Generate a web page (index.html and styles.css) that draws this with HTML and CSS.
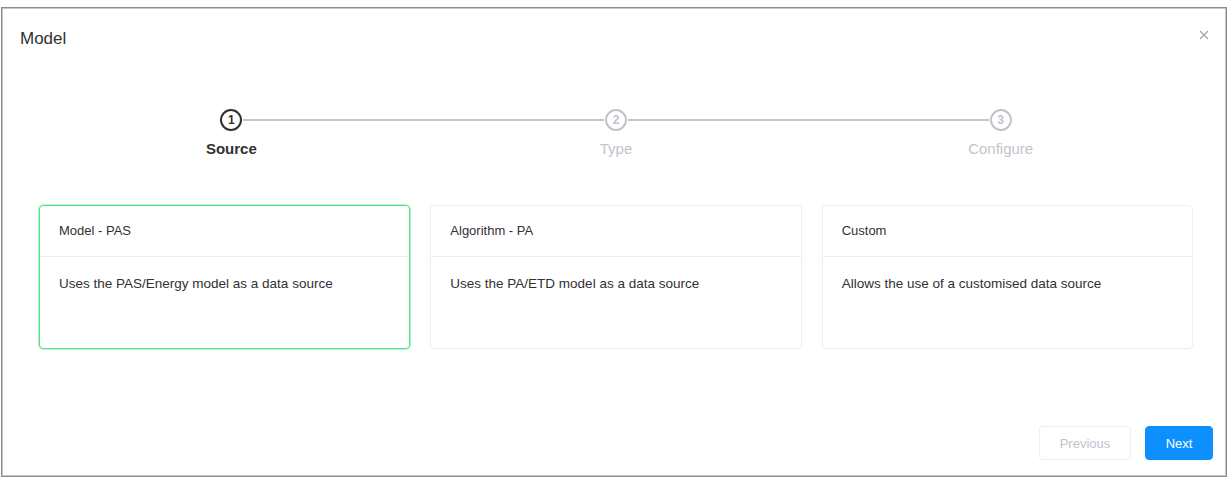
FILE: index.html
```html
<!DOCTYPE html>
<html>
<head>
<meta charset="utf-8">
<link rel="stylesheet" href="styles.css">
</head>
<body>
<div class="frame">
  <div class="header">
    <div class="title">Model</div>
    <svg class="close" width="10" height="10" viewBox="0 0 10 10"><path d="M1 1L9 9M9 1L1 9" stroke="#a3a9b4" stroke-width="1.3" fill="none"/></svg>
  </div>
  <div class="steps">
    <div class="step active">
      <div class="circle">1</div>
      <div class="label">Source</div>
    </div>
    <div class="step">
      <div class="circle">2</div>
      <div class="label">Type</div>
    </div>
    <div class="step last">
      <div class="circle">3</div>
      <div class="label">Configure</div>
    </div>
  </div>
  <div class="cards">
    <div class="card selected">
      <div class="card-head">Model - PAS</div>
      <div class="card-body">Uses the PAS/Energy model as a data source</div>
    </div>
    <div class="card">
      <div class="card-head">Algorithm - PA</div>
      <div class="card-body">Uses the PA/ETD model as a data source</div>
    </div>
    <div class="card">
      <div class="card-head">Custom</div>
      <div class="card-body">Allows the use of a customised data source</div>
    </div>
  </div>
  <div class="footer">
    <button class="btn btn-prev">Previous</button>
    <button class="btn btn-next">Next</button>
  </div>
</div>
</body>
</html>
```
FILE: styles.css
```css
html, body {
  margin: 0;
  padding: 0;
  background: #ffffff;
}
body {
  font-family: "Liberation Sans", Arial, sans-serif;
  color: #303133;
}
.frame {
  margin: 7px 0 0 1px;
  width: 1226px;
  height: 470px;
  box-sizing: border-box;
  border: 1px solid #8c8c8c;
  box-shadow: inset 0 0 0 1px #c4c4c4;
  padding: 1px;
}
.header {
  display: flex;
  justify-content: space-between;
  align-items: center;
  padding: 18px 16px 0 17px;
}
.title {
  font-size: 17px;
  line-height: 24px;
  color: #303133;
}
.close {
  display: block;
  margin-top: -8px;
}
.steps {
  display: grid;
  grid-template-columns: repeat(3, 1fr);
  width: 1154px;
  margin: 58px 0 0 36px;
}
.step {
  position: relative;
  display: flex;
  flex-direction: column;
  align-items: center;
}
.step::after {
  content: "";
  position: absolute;
  top: 10px;
  left: calc(50% + 12px);
  width: calc(100% - 24px);
  height: 2px;
  background: #c0c4cc;
}
.step.last::after {
  display: none;
}
.circle {
  width: 22px;
  height: 22px;
  box-sizing: border-box;
  border: 2px solid #c0c4cc;
  border-radius: 50%;
  color: #c0c4cc;
  font-size: 12px;
  font-weight: bold;
  line-height: 18px;
  text-align: center;
  background: #fff;
}
.label {
  margin-top: 8px;
  font-size: 15px;
  line-height: 20px;
  color: #c0c4cc;
}
.step.active .circle {
  border-color: #303133;
  color: #303133;
}
.step.active .label {
  color: #303133;
  font-weight: bold;
}
.cards {
  display: grid;
  grid-template-columns: repeat(3, 1fr);
  column-gap: 20px;
  width: 1154px;
  margin: 46px 0 0 36px;
}
.card {
  height: 144px;
  box-sizing: border-box;
  border: 1px solid #ebeef5;
  border-radius: 4px;
  font-size: 13px;
  color: #303133;
}
.card.selected {
  border-color: #52e38a;
  box-shadow: 0 0 0 0.6px #7eeaa6;
}
.card-head {
  height: 50px;
  line-height: 50px;
  padding: 0 19px;
  border-bottom: 1px solid #ebeef5;
}
.card-body {
  padding: 19px 19px 0;
  line-height: 16px;
  font-size: 13.5px;
}
.footer {
  display: flex;
  justify-content: flex-end;
  gap: 14px;
  margin-top: 77px;
  padding-right: 12px;
}
.btn {
  height: 34px;
  box-sizing: border-box;
  border-radius: 4px;
  font-family: "Liberation Sans", Arial, sans-serif;
  font-size: 13px;
  padding: 0;
  cursor: pointer;
}
.btn-prev {
  width: 92px;
  background: #fff;
  border: 1px solid #ebeef5;
  color: #c0c4cc;
}
.btn-next {
  width: 68px;
  background: #0d8ffe;
  border: 1px solid #0d8ffe;
  color: #fff;
}
```
